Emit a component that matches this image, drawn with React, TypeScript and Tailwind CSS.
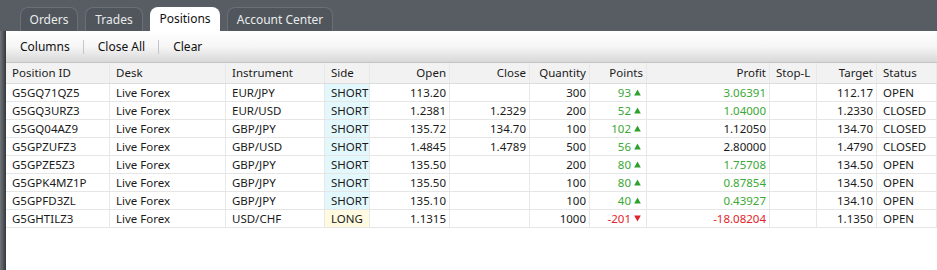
import React from "react";

type Row = {
  id: string;
  pair: string;
  side: "SHORT" | "LONG";
  open: string;
  close: string;
  qty: string;
  points: string;
  profit: string;
  profitTone: "green" | "red" | "plain";
  target: string;
  status: string;
};

const rows: Row[] = [
  { id: "G5GQ71QZ5", pair: "EUR/JPY", side: "SHORT", open: "113.20", close: "", qty: "300", points: "93", profit: "3.06391", profitTone: "green", target: "112.17", status: "OPEN" },
  { id: "G5GQ3URZ3", pair: "EUR/USD", side: "SHORT", open: "1.2381", close: "1.2329", qty: "200", points: "52", profit: "1.04000", profitTone: "green", target: "1.2330", status: "CLOSED" },
  { id: "G5GQ04AZ9", pair: "GBP/JPY", side: "SHORT", open: "135.72", close: "134.70", qty: "100", points: "102", profit: "1.12050", profitTone: "plain", target: "134.70", status: "CLOSED" },
  { id: "G5GPZUFZ3", pair: "GBP/USD", side: "SHORT", open: "1.4845", close: "1.4789", qty: "500", points: "56", profit: "2.80000", profitTone: "plain", target: "1.4790", status: "CLOSED" },
  { id: "G5GPZE5Z3", pair: "GBP/JPY", side: "SHORT", open: "135.50", close: "", qty: "200", points: "80", profit: "1.75708", profitTone: "green", target: "134.50", status: "OPEN" },
  { id: "G5GPK4MZ1P", pair: "GBP/JPY", side: "SHORT", open: "135.50", close: "", qty: "100", points: "80", profit: "0.87854", profitTone: "green", target: "134.50", status: "OPEN" },
  { id: "G5GPFD3ZL", pair: "GBP/JPY", side: "SHORT", open: "135.10", close: "", qty: "100", points: "40", profit: "0.43927", profitTone: "green", target: "134.10", status: "OPEN" },
  { id: "G5GHTILZ3", pair: "USD/CHF", side: "LONG", open: "1.1315", close: "", qty: "1000", points: "-201", profit: "-18.08204", profitTone: "red", target: "1.1350", status: "OPEN" },
];

const cols = [
  { label: "Position ID", w: "w-[104px]", right: false },
  { label: "Desk", w: "w-[116px]", right: false },
  { label: "Instrument", w: "w-[99px]", right: false },
  { label: "Side", w: "w-[45px]", right: false },
  { label: "Open", w: "w-[80px]", right: true },
  { label: "Close", w: "w-[80px]", right: true },
  { label: "Quantity", w: "w-[60px]", right: true },
  { label: "Points", w: "w-[57px]", right: true },
  { label: "Profit", w: "w-[123px]", right: true },
  { label: "Stop-L", w: "w-[47px]", right: false },
  { label: "Target", w: "w-[60px]", right: true },
  { label: "Status", w: "w-[60px]", right: false },
];

const tabs = [
  { label: "Orders", w: "w-[58px]" },
  { label: "Trades", w: "w-[58px]" },
  { label: "Positions", w: "w-[70px]" },
  { label: "Account Center", w: "w-[106px]" },
];

function Arrow({ up }: { up: boolean }) {
  return (
    <svg width="7" height="7" viewBox="0 0 7 7" className="ml-[3px] shrink-0">
      {up ? (
        <path d="M3.5 0.5 L6.8 6.5 L0.2 6.5 Z" fill="#2ea02e" />
      ) : (
        <path d="M0.2 0.5 L6.8 0.5 L3.5 6.5 Z" fill="#e0232a" />
      )}
    </svg>
  );
}

const green = "text-[#3aa835]";
const red = "text-[#e1242b]";

function Cell({
  w,
  right,
  className = "",
  children,
}: {
  w: string;
  right?: boolean;
  className?: string;
  children?: React.ReactNode;
}) {
  return (
    <div
      className={`${w} shrink-0 h-full flex items-center border-r border-[#e8e8e8] whitespace-nowrap overflow-hidden ${
        right ? "justify-end pr-[3px]" : "pl-[6px]"
      } ${className}`}
    >
      {children}
    </div>
  );
}

export default function App() {
  return (
    <div
      className="w-[937px] h-[270px] flex flex-col bg-[#575d63] overflow-hidden text-[11.5px] text-[#1a1a1a]"
      style={{ fontFamily: '"Noto Sans", "Open Sans", sans-serif' }}
    >
      {/* tab strip */}
      <div className="h-[31px] shrink-0 flex items-end gap-[7px] pl-[20px]">
        {tabs.map((t) =>
          t.label === "Positions" ? (
            <div
              key={t.label}
              className={`${t.w} h-[24px] flex items-center justify-center rounded-t-[8px] bg-white text-[12px] text-[#111]`}
            >
              {t.label}
            </div>
          ) : (
            <div
              key={t.label}
              className={`${t.w} h-[24px] flex items-center justify-center rounded-t-[8px] bg-[#50565c] border border-b-0 border-[#6a7076] text-[12px] text-[#e9ebec]`}
            >
              {t.label}
            </div>
          )
        )}
      </div>

      <div className="flex flex-1 min-h-0">
        <div className="w-[6px] shrink-0 bg-gradient-to-r from-[#707579] via-[#55595d] to-[#33373a]" />

        <div className="flex-1 flex flex-col bg-white min-w-0">
          {/* toolbar */}
          <div className="h-[32px] shrink-0 flex items-center pl-[14px] bg-gradient-to-b from-white via-[#f6f6f6] to-[#d8d8d8] border-b border-[#c4c4c4] text-[12px] text-[#111]">
            <span>Columns</span>
            <span className="ml-[13px] mr-[14px] w-px h-[14px] bg-[#c6c6c6]" />
            <span>Close All</span>
            <span className="ml-[13px] mr-[14px] w-px h-[14px] bg-[#c6c6c6]" />
            <span>Clear</span>
          </div>

          {/* header */}
          <div className="h-[21px] shrink-0 flex bg-[#f2f2f2] border-b border-[#dcdcdc]">
            {cols.map((c) => (
              <Cell key={c.label} w={c.w} right={c.right} className="border-[#d8d8d8]">
                {c.label}
              </Cell>
            ))}
          </div>

          {/* rows */}
          {rows.map((r) => {
            const neg = r.points.startsWith("-");
            const profitCls =
              r.profitTone === "green" ? green : r.profitTone === "red" ? red : "";
            return (
              <div key={r.id} className="h-[18px] shrink-0 flex border-b border-[#e6e6e6]">
                <Cell w="w-[104px]">{r.id}</Cell>
                <Cell w="w-[116px]">Live Forex</Cell>
                <Cell w="w-[99px]">{r.pair}</Cell>
                <Cell
                  w="w-[45px]"
                  className={r.side === "SHORT" ? "bg-[#e3f8fc] pl-[5px]" : "bg-[#fffae0] pl-[5px]"}
                >
                  {r.side}
                </Cell>
                <Cell w="w-[80px]" right>{r.open}</Cell>
                <Cell w="w-[80px]" right>{r.close}</Cell>
                <Cell w="w-[60px]" right>{r.qty}</Cell>
                <Cell w="w-[57px]" right className={`pr-[5px] ${neg ? red : green}`}>
                  {r.points}
                  <Arrow up={!neg} />
                </Cell>
                <Cell w="w-[123px]" right className={profitCls}>{r.profit}</Cell>
                <Cell w="w-[47px]" />
                <Cell w="w-[60px]" right>{r.target}</Cell>
                <Cell w="w-[60px]" className="pl-[4px]">{r.status}</Cell>
              </div>
            );
          })}
        </div>
      </div>
    </div>
  );
}
